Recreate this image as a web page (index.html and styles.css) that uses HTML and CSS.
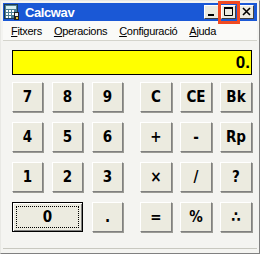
FILE: index.html
```html
<!DOCTYPE html>
<html>
<head>
<meta charset="utf-8">
<link rel="stylesheet" href="styles.css">
</head>
<body>
<div class="window">
  <div class="titlebar">
    <svg class="appicon" width="16" height="16" viewBox="0 0 16 16">
      <rect x="0.5" y="0.5" width="13" height="14" fill="#4d7f93" stroke="#1d3b55"/>
      <rect x="2" y="2" width="10" height="3" fill="#d8f0f0"/>
      <g fill="#ffffff">
        <rect x="2" y="6" width="2" height="2"/><rect x="5" y="6" width="2" height="2"/><rect x="8" y="6" width="2" height="2"/>
        <rect x="2" y="9" width="2" height="2"/><rect x="5" y="9" width="2" height="2"/><rect x="8" y="9" width="2" height="2"/>
        <rect x="2" y="12" width="2" height="2"/><rect x="5" y="12" width="2" height="2"/>
      </g>
      <path d="M10 8 L15 8 L15 16 L10 16 Z" fill="#202020"/>
      <path d="M11 9 L14 9 L14 12 L11 12 Z" fill="#f0f0f0"/>
      <rect x="12" y="13" width="2" height="2" fill="#e0c040"/>
    </svg>
    <span class="title">Calcwav</span>
    <div class="caption-btns">
      <div class="cbtn">
        <svg width="15" height="14" viewBox="0 0 15 14"><rect x="4" y="9" width="6" height="2" fill="#000"/></svg>
      </div>
      <div class="cbtn max">
        <svg width="15" height="14" viewBox="0 0 15 14"><path d="M3.5 2.5 H11.5 V10.5 H3.5 Z" fill="none" stroke="#000"/><rect x="3" y="2" width="9" height="2" fill="#000"/></svg>
      </div>
      <div class="cbtn close">
        <svg width="15" height="14" viewBox="0 0 15 14"><path d="M4 3 L11 10 M11 3 L4 10" stroke="#000" stroke-width="1.6" fill="none"/></svg>
      </div>
    </div>
  </div>
  <div class="menubar">
    <span class="mi"><u>F</u>itxers</span>
    <span class="mi"><u>O</u>peracions</span>
    <span class="mi"><u>C</u>onfiguració</span>
    <span class="mi"><u>A</u>juda</span>
  </div>
  <div class="panel">
    <div class="display">0.</div>
    <div class="keys">
      <div class="pad left">
        <div class="key">7</div><div class="key">8</div><div class="key">9</div>
        <div class="key">4</div><div class="key">5</div><div class="key">6</div>
        <div class="key">1</div><div class="key">2</div><div class="key">3</div>
        <div class="key zero"><span class="focus">0</span></div><div class="key">.</div>
      </div>
      <div class="pad right">
        <div class="key">C</div><div class="key">CE</div><div class="key">Bk</div>
        <div class="key">+</div><div class="key">-</div><div class="key">Rp</div>
        <div class="key">×</div><div class="key">/</div><div class="key">?</div>
        <div class="key">=</div><div class="key">%</div><div class="key">∴</div>
      </div>
    </div>
  </div>
  <div class="redbox"></div>
</div>
</body>
</html>
```
FILE: styles.css
```css
body {
  margin: 0;
  background: #ffffff;
}
.window {
  position: relative;
  width: 260px;
  height: 254px;
  box-sizing: border-box;
  border: 1px solid;
  border-color: #e8e8e4 #808080 #808080 #e8e8e4;
  padding: 2px;
  background: #f4f4f1;
  display: flex;
  flex-direction: column;
  font-family: "Liberation Sans", Arial, sans-serif;
}
.titlebar {
  height: 18px;
  background: #1a58d6;
  display: flex;
  align-items: center;
  padding-left: 1px;
  padding-right: 3px;
}
.appicon {
  display: block;
  flex: none;
}
.title {
  margin-left: 5px;
  color: #ffffff;
  font-weight: bold;
  font-size: 13px;
  letter-spacing: -0.4px;
}
.caption-btns {
  margin-left: auto;
  display: flex;
  align-items: center;
}
.cbtn {
  width: 15px;
  height: 14px;
  box-sizing: border-box;
  background: #ecebe0;
  border: 1px solid;
  border-color: #ffffff #404040 #404040 #ffffff;
  display: flex;
  align-items: center;
  justify-content: center;
  overflow: hidden;
}
.cbtn svg {
  display: block;
  flex: none;
}
.cbtn.max {
  margin-left: 2px;
}
.cbtn.close {
  margin-left: 3px;
}
.menubar {
  height: 19px;
  border-bottom: 1px solid #d4d4cc;
  display: flex;
  align-items: center;
  gap: 12px;
  padding-left: 8px;
  font-size: 11px;
  letter-spacing: -0.3px;
  color: #000000;
  background: #fafaf8;
}
.panel {
  flex: 1;
  padding: 9px 5px 0 9px;
  border-bottom: 1px solid #c8c8c0;
  margin-bottom: 2px;
}
.display {
  height: 25px;
  box-sizing: border-box;
  border: 1px solid #000000;
  background: #ffff00;
  text-align: right;
  font-weight: bold;
  font-size: 17px;
  line-height: 23px;
  padding-right: 1px;
  color: #000000;
}
.keys {
  margin-top: 7px;
  display: flex;
  gap: 17px;
}
.pad {
  display: grid;
  grid-auto-rows: 30px;
  row-gap: 10px;
}
.pad.left {
  grid-template-columns: repeat(3, 31px);
  column-gap: 9px;
}
.pad.right {
  grid-template-columns: repeat(3, 32px);
  column-gap: 8px;
}
.key {
  box-sizing: border-box;
  background: #ecebe0;
  border: 1px solid;
  border-color: #ffffff #808080 #808080 #ffffff;
  box-shadow: 1px 1px 0 #9a9a94;
  display: flex;
  align-items: center;
  justify-content: center;
  font-family: "Liberation Sans Narrow", "DejaVu Sans Condensed", "Liberation Sans", sans-serif;
  font-weight: bold;
  font-size: 15px;
  color: #000000;
}
.key.zero {
  grid-column: span 2;
  border: 1px solid #000000;
  box-shadow: inset 1px 1px 0 #ffffff, inset -1px -1px 0 #808080;
  padding: 3px;
}
.focus {
  flex: 1;
  align-self: stretch;
  border: 1px dotted #000000;
  display: flex;
  align-items: center;
  justify-content: center;
}
.redbox {
  position: absolute;
  left: 217px;
  top: 0px;
  width: 22px;
  height: 23px;
  box-sizing: border-box;
  border: 3px solid #f04a22;
}
```
